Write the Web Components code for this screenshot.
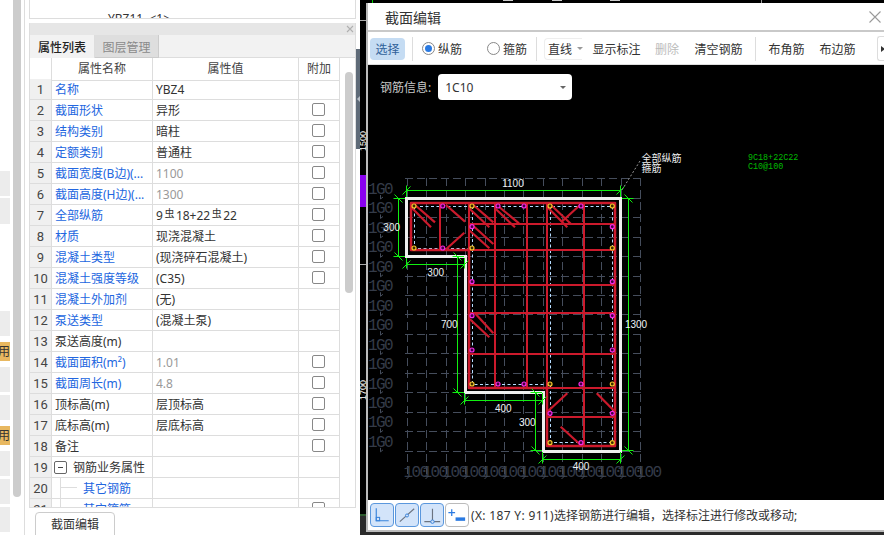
<!DOCTYPE html>
<html>
<head>
<meta charset="utf-8">
<title>截面编辑</title>
<style>
    html, body { margin: 0; padding: 0; background: #fff; overflow: hidden; }
    body { font-family: "Noto Sans", "Noto Sans CJK SC", sans-serif; font-size: 12px; color: #333; }
</style>
</head>
<body>
<gl-workspace>
    <gl-side-rail></gl-side-rail>
    <gl-attr-column>
        <gl-attr-row num="1" label="名称" link nocheck>YBZ4</gl-attr-row>
        <gl-attr-row num="2" label="截面形状" link>异形</gl-attr-row>
        <gl-attr-row num="3" label="结构类别" link>暗柱</gl-attr-row>
        <gl-attr-row num="4" label="定额类别" link>普通柱</gl-attr-row>
        <gl-attr-row num="5" label="截面宽度(B边)(..." link muted>1100</gl-attr-row>
        <gl-attr-row num="6" label="截面高度(H边)(..." link muted>1300</gl-attr-row>
        <gl-attr-row num="7" label="全部纵筋" link>9<gl-rebar-mark></gl-rebar-mark>18+22<gl-rebar-mark></gl-rebar-mark>22</gl-attr-row>
        <gl-attr-row num="8" label="材质" link>现浇混凝土</gl-attr-row>
        <gl-attr-row num="9" label="混凝土类型" link>(现浇碎石混凝土)</gl-attr-row>
        <gl-attr-row num="10" label="混凝土强度等级" link>(C35)</gl-attr-row>
        <gl-attr-row num="11" label="混凝土外加剂" link nocheck>(无)</gl-attr-row>
        <gl-attr-row num="12" label="泵送类型" link nocheck>(混凝土泵)</gl-attr-row>
        <gl-attr-row num="13" label="泵送高度(m)" nocheck></gl-attr-row>
        <gl-attr-row num="14" label="截面面积(m²)" link muted>1.01</gl-attr-row>
        <gl-attr-row num="15" label="截面周长(m)" link muted>4.8</gl-attr-row>
        <gl-attr-row num="16" label="顶标高(m)">层顶标高</gl-attr-row>
        <gl-attr-row num="17" label="底标高(m)">层底标高</gl-attr-row>
        <gl-attr-row num="18" label="备注"></gl-attr-row>
        <gl-attr-row num="19" label="钢筋业务属性" tree="group" nocheck></gl-attr-row>
        <gl-attr-row num="20" label="其它钢筋" link tree="leaf" nocheck></gl-attr-row>
        <gl-attr-row num="21" label="其它箍筋" link tree="leaf"></gl-attr-row>
    </gl-attr-column>
    <gl-splitter></gl-splitter>
    <gl-cad-view>
        <gl-section-dialog>
            <gl-tool-btn active style="margin-left:2px;width:35px">选择</gl-tool-btn>
            <gl-tool-sep style="margin-left:7px"></gl-tool-sep>
            <gl-tool-radio checked style="margin-left:9px;width:40px">纵筋</gl-tool-radio>
            <gl-tool-radio style="margin-left:25px;width:42px">箍筋</gl-tool-radio>
            <gl-tool-sep style="margin-left:7px"></gl-tool-sep>
            <gl-tool-combo style="margin-left:7px">直线</gl-tool-combo>
            <gl-tool-btn style="margin-left:10px;width:49px">显示标注</gl-tool-btn>
            <gl-tool-btn disabled style="margin-left:14px;width:24px">删除</gl-tool-btn>
            <gl-tool-btn style="margin-left:15px;width:49px">清空钢筋</gl-tool-btn>
            <gl-tool-sep style="margin-left:12px"></gl-tool-sep>
            <gl-tool-btn style="margin-left:12px;width:37px">布角筋</gl-tool-btn>
            <gl-tool-btn style="margin-left:14px;width:37px">布边筋</gl-tool-btn>
            <gl-tool-more style="margin-left:21px"></gl-tool-more>
            <gl-section-canvas slot="canvas"></gl-section-canvas>
            <gl-snap-btn slot="status" icon="corner" on></gl-snap-btn>
            <gl-snap-btn slot="status" icon="line" on></gl-snap-btn>
            <gl-snap-btn slot="status" icon="perp" on></gl-snap-btn>
            <gl-snap-btn slot="status" icon="add"></gl-snap-btn>
            <span slot="message"><span style="letter-spacing:.33px">(X: 187 Y: 911)</span>选择钢筋进行编辑，选择标注进行修改或移动;</span>
        </gl-section-dialog>
    </gl-cad-view>
</gl-workspace>

<script>
const tmplWorkspace = document.createElement('template');
tmplWorkspace.innerHTML = `
    <style>
        :host{ display:flex; width:884px; height:535px; overflow:hidden; background:#fff; }
    </style>
    <slot></slot>
`;
class GlWorkspace extends HTMLElement {
    constructor() {
        super()
        this.attachShadow({ mode: 'open' })
        this.shadowRoot.appendChild(tmplWorkspace.content.cloneNode(true))
    }
}
window.customElements.define('gl-workspace', GlWorkspace);

// left rail: cut off list blocks + scrollbar of the window behind
const tmplSideRail = document.createElement('template');
tmplSideRail.innerHTML = `
    <style>
        :host{ display:flex; flex:none; width:29px; height:535px; background:#fff; box-sizing:border-box; overflow:hidden; }
        #blocks{ width:10px; flex:none; display:flex; flex-direction:column; overflow:hidden; }
        .block{ flex:none; background:#ececec; }
        .block.warn{ background:#e8b860; color:#333; font-size:12px; line-height:20px; text-align:right; overflow:hidden; white-space:nowrap; direction:rtl; }
        #bar{ width:8px; height:497px; margin-left:3px; background:#ccc; border-radius:0 0 4px 4px; flex:none; }
        #line{ width:1px; height:535px; margin-left:3px; background:#ddd; flex:none; }
    </style>
    <div id="blocks"></div>
    <div id="bar"></div>
    <div id="line"></div>
`;
class GlSideRail extends HTMLElement {
    constructor() {
        super()
        this.attachShadow({ mode: 'open' })
        this.shadowRoot.appendChild(tmplSideRail.content.cloneNode(true))
    }
    connectedCallback() {
        // [gap above, height, warn]
        const blocks = [[171, 25], [2, 26], [87, 25], [6, 19, 1], [6, 25], [3, 25], [6, 19, 1], [6, 25], [3, 25], [3, 25]];
        const host = this.shadowRoot.getElementById('blocks');
        blocks.forEach(b => {
            const el = document.createElement('div');
            el.className = b[2] ? 'block warn' : 'block';
            el.style.marginTop = b[0] + 'px';
            el.style.height = b[1] + 'px';
            if (b[2]) el.textContent = '用';
            host.appendChild(el);
        });
    }
}
window.customElements.define('gl-side-rail', GlSideRail);

const tmplAttrColumn = document.createElement('template');
tmplAttrColumn.innerHTML = `
    <style>
        :host{ display:flex; flex-direction:column; flex:none; width:327px; height:535px; box-sizing:border-box; overflow:hidden; background:#fff; }
        #peek{ flex:none; height:19px; box-sizing:border-box; border:1px solid #ddd; border-top:none; overflow:hidden; padding-left:78px; font-size:12px; line-height:37px; color:#333; white-space:pre; }
        #panel{ flex:none; margin-top:4px; height:485px; box-sizing:border-box; border:1px solid #ddd; border-top:none; display:flex; flex-direction:column; overflow:hidden; }
        #head{ flex:none; height:12px; background:#e6e6e6; display:flex; justify-content:flex-end; align-items:center; padding-right:2px; margin:0 -1px; }
        #tabs{ flex:none; height:23px; background:#f2f2f2; display:flex; border-bottom:1px solid #ddd; box-sizing:border-box; }
        .tab{ height:23px; width:65px; box-sizing:border-box; text-align:center; line-height:25px; font-size:12px; }
        .tab.on{ color:#222; font-weight:500; background:#f2f2f2; border-right:1px solid #ddd; }
        .tab.off{ color:#8a8a8a; background:#dedede; border-right:1px solid #ccc; border-bottom:1px solid #ccc; width:64px; }
        #body{ flex:1; display:flex; min-height:0; }
        #table{ flex:none; width:310px; display:flex; flex-direction:column; overflow:hidden; }
        #columns{ flex:none; display:grid; grid-template-columns:22px 101px 146px 41px; height:21px; font-size:12px; color:#444; }
        #columns div{ box-sizing:border-box; border-right:1px solid #ddd; border-bottom:1px solid #ddd; text-align:center; line-height:22px; }
        #gutter{ flex:1; box-sizing:border-box; padding:14px 0 0 5px; }
        #thumb{ width:8px; height:221px; background:#ccc; border-radius:4px; }
        #foot{ flex:none; padding:4px 0 0 6px; }
        button{ display:block; width:80px; height:30px; box-sizing:border-box; background:#fff; border:1px solid #ccc; border-radius:4px; font:inherit; color:#333; font-size:12px; line-height:22px; padding:0 0 4px; }
    </style>
    <div id="peek">YBZ11  &lt;1&gt;</div>
    <div id="panel">
        <div id="head">
            <svg width="8" height="8" viewBox="0 0 8 8"><path d="M1 1L7 7M7 1L1 7" stroke="#b0b0b0" stroke-width="1.1" fill="none"/></svg>
        </div>
        <div id="tabs">
            <div class="tab on">属性列表</div>
            <div class="tab off">图层管理</div>
        </div>
        <div id="body">
            <div id="table">
                <div id="columns">
                    <div></div><div>属性名称</div><div>属性值</div><div>附加</div>
                </div>
                <slot></slot>
            </div>
            <div id="gutter"><div id="thumb"></div></div>
        </div>
    </div>
    <div id="foot"><button>截面编辑</button></div>
`;
class GlAttrColumn extends HTMLElement {
    constructor() {
        super()
        this.attachShadow({ mode: 'open' })
        this.shadowRoot.appendChild(tmplAttrColumn.content.cloneNode(true))
    }
}
window.customElements.define('gl-attr-column', GlAttrColumn);

const tmplAttrRow = document.createElement('template');
tmplAttrRow.innerHTML = `
    <style>
        :host{ display:grid; flex:none; grid-template-columns:22px 101px 146px 41px; height:21px; font-size:12px; color:#333; }
        .cell{ box-sizing:border-box; height:21px; border-right:1px solid #ddd; border-bottom:1px solid #ddd; line-height:22px; white-space:nowrap; overflow:hidden; }
        #num{ background:#f0f0f0; text-align:center; font-family:Roboto, "Noto Sans", sans-serif; font-size:13px; color:#444; }
        #name{ padding-left:3px; position:relative; display:flex; align-items:center; }
        #label{ line-height:20px; padding-top:2px; margin-bottom:0; height:20px; margin-top:0; }
        :host([link]) #label{ color:#2266e0; }
        #value{ padding-left:3px; }
        :host([muted]) #value{ color:#999; }
        #check{ display:flex; align-items:center; justify-content:center; padding-right:1px; padding-bottom:1px; }
        #box{ width:13px; height:13px; box-sizing:border-box; border:1px solid #888; border-radius:2px; background:#fff; }
        :host([nocheck]) #box{ display:none; }
        #toggle{ display:none; width:13px; height:13px; box-sizing:border-box; border:1px solid #666; border-radius:2px; margin-left:-1px; margin-right:6px; position:relative; }
        #toggle::after{ content:""; position:absolute; left:3px; right:3px; top:5px; height:1px; background:#444; }
        :host([tree="group"]) #toggle{ display:block; }
        :host([tree="leaf"]) #name{ padding-left:31px; }
        :host([tree="leaf"]) #name::before{ content:""; position:absolute; left:8px; top:0; bottom:0; width:1px; background:#ddd; }
        :host([tree="leaf"]) #name::after{ content:""; position:absolute; left:9px; top:9px; width:16px; height:1px; background:#ddd; }
    </style>
    <div class="cell" id="num"></div>
    <div class="cell" id="name"><span id="toggle"></span><span id="label"></span></div>
    <div class="cell" id="value"><slot></slot></div>
    <div class="cell" id="check"><div id="box"></div></div>
`;
class GlAttrRow extends HTMLElement {
    constructor() {
        super()
        this.attachShadow({ mode: 'open' })
        this.shadowRoot.appendChild(tmplAttrRow.content.cloneNode(true))
    }
    $(id) { return this.shadowRoot.getElementById(id) }
    attributeChangedCallback(name, oldVal, newVal) {
        switch (name) {
            case 'num':
                this.$('num').textContent = newVal;
                break;
            case 'label':
                this.$('label').textContent = newVal;
                break;
            default:
                break;
        }
    }
    static get observedAttributes() {
        return ['num', 'label']
    }
}
window.customElements.define('gl-attr-row', GlAttrRow);

// steel grade sign in the rebar text, the app's font has it as a small raised glyph
const tmplRebarMark = document.createElement('template');
tmplRebarMark.innerHTML = `
    <style>
        :host{ display:inline-block; font-size:10px; line-height:10px; vertical-align:3px; margin:0 1.5px; color:#333; }
    </style>
    虫
`;
class GlRebarMark extends HTMLElement {
    constructor() {
        super()
        this.attachShadow({ mode: 'open' })
        this.shadowRoot.appendChild(tmplRebarMark.content.cloneNode(true))
    }
}
window.customElements.define('gl-rebar-mark', GlRebarMark);

const tmplSplitter = document.createElement('template');
tmplSplitter.innerHTML = `
    <style>
        :host{ display:block; flex:none; width:4px; height:535px; padding-top:49px; box-sizing:border-box; background:#fff; }
        #grip{ width:4px; height:100px; background:#5f6b78; display:flex; align-items:center; justify-content:center; }
        #grip::after{ content:""; border-right:3px solid #b9c0c8; border-top:3px solid transparent; border-bottom:3px solid transparent; }
    </style>
    <div id="grip"></div>
`;
class GlSplitter extends HTMLElement {
    constructor() {
        super()
        this.attachShadow({ mode: 'open' })
        this.shadowRoot.appendChild(tmplSplitter.content.cloneNode(true))
    }
}
window.customElements.define('gl-splitter', GlSplitter);

// the cad drawing behind the dialog, only its edges show
const tmplCadView = document.createElement('template');
tmplCadView.innerHTML = `
    <style>
        :host{ display:block; position:relative; flex:1; height:535px; box-sizing:border-box; padding:3px 0 3px 6px; background:#000; overflow:hidden; }
        svg{ position:absolute; left:0; top:0; width:524px; height:535px; }
        text{ font-family:"Liberation Sans", sans-serif; font-size:9px; fill:#fff; }
        ::slotted(*){ position:relative; }
    </style>
    <svg viewBox="360 0 524 535">
        <rect x="360" y="175" width="7" height="32" fill="#8a00f0"/>
        <rect x="360" y="20" width="7" height="1" fill="#aaa"/>
        <rect x="360" y="264" width="7" height="1" fill="#aaa"/>
        <rect x="360" y="514" width="7" height="2" fill="#2c5a2c"/>
        <rect x="360" y="516" width="7" height="19" fill="#2b2b2b"/>
        <rect x="367" y="532" width="517" height="3" fill="#2b2b2b"/>
        <rect x="372" y="0" width="1" height="3" fill="#0c0"/>
        <rect x="761" y="0" width="1" height="3" fill="#999"/>
        <rect x="503" y="0" width="10" height="1" fill="#ccc"/>
        <rect x="552" y="0" width="10" height="1" fill="#ccc"/>
        <rect x="610" y="0" width="10" height="1" fill="#ccc"/>
        <text transform="translate(365.5 151) rotate(-90)">1500</text>
        <text transform="translate(365.5 400) rotate(-90)">1700</text>
    </svg>
    <slot></slot>
`;
class GlCadView extends HTMLElement {
    constructor() {
        super()
        this.attachShadow({ mode: 'open' })
        this.shadowRoot.appendChild(tmplCadView.content.cloneNode(true))
    }
}
window.customElements.define('gl-cad-view', GlCadView);

const tmplSectionDialog = document.createElement('template');
tmplSectionDialog.innerHTML = `
    <style>
        :host{ display:flex; flex-direction:column; width:518px; height:529px; box-sizing:border-box; background:#fff; border-left:2px solid #bbb; border-bottom:2px solid #bbb; }
        #title{ flex:none; height:27px; display:flex; align-items:center; justify-content:space-between; padding:0 0 0 17px; font-size:14px; color:#333; }
        #title svg{ margin-right:2px; }
        #tools{ flex:none; height:35px; box-sizing:border-box; border-top:2px solid #c9c9c9; border-bottom:1px solid #ddd; display:flex; align-items:center; padding-top:1px; }
        #canvas{ flex:1; min-height:0; display:flex; }
        #status{ flex:none; height:30px; box-sizing:border-box; padding:3px 0 3px 2px; display:flex; align-items:center; gap:1px; font-size:12px; color:#333; white-space:nowrap; }
        #message{ margin-left:1px; }
    </style>
    <div id="title">
        <span>截面编辑</span>
        <svg width="14" height="14" viewBox="0 0 14 14"><path d="M1.5 1.5L12.5 12.5M12.5 1.5L1.5 12.5" stroke="#9a9a9a" stroke-width="1.1" fill="none"/></svg>
    </div>
    <div id="tools"><slot></slot></div>
    <div id="canvas"><slot name="canvas"></slot></div>
    <div id="status"><slot name="status"></slot><span id="message"><slot name="message"></slot></span></div>
`;
class GlSectionDialog extends HTMLElement {
    constructor() {
        super()
        this.attachShadow({ mode: 'open' })
        this.shadowRoot.appendChild(tmplSectionDialog.content.cloneNode(true))
    }
}
window.customElements.define('gl-section-dialog', GlSectionDialog);

const tmplToolBtn = document.createElement('template');
tmplToolBtn.innerHTML = `
    <style>
        :host{ display:block; flex:none; height:22px; line-height:23px; text-align:center; font-size:12px; color:#333; border-radius:4px; white-space:nowrap; }
        :host([active]){ background:#c5dcf3; color:#2f6199; }
        :host([disabled]){ color:#bbb; }
    </style>
    <slot></slot>
`;
class GlToolBtn extends HTMLElement {
    constructor() {
        super()
        this.attachShadow({ mode: 'open' })
        this.shadowRoot.appendChild(tmplToolBtn.content.cloneNode(true))
    }
}
window.customElements.define('gl-tool-btn', GlToolBtn);

const tmplToolSep = document.createElement('template');
tmplToolSep.innerHTML = `
    <style>
        :host{ display:block; flex:none; width:1px; height:24px; background:#ddd; }
    </style>
`;
class GlToolSep extends HTMLElement {
    constructor() {
        super()
        this.attachShadow({ mode: 'open' })
        this.shadowRoot.appendChild(tmplToolSep.content.cloneNode(true))
    }
}
window.customElements.define('gl-tool-sep', GlToolSep);

const tmplToolRadio = document.createElement('template');
tmplToolRadio.innerHTML = `
    <style>
        :host{ display:flex; flex:none; align-items:center; font-size:12px; color:#333; white-space:nowrap; }
        #ring{ width:13px; height:13px; box-sizing:border-box; border:1px solid #888; border-radius:50%; margin-right:3px; flex:none; display:flex; align-items:center; justify-content:center; }
        #dot{ display:none; width:7px; height:7px; border-radius:50%; background:#2a7ae2; }
        :host([checked]) #dot{ display:block; }
    </style>
    <div id="ring"><div id="dot"></div></div>
    <slot></slot>
`;
class GlToolRadio extends HTMLElement {
    constructor() {
        super()
        this.attachShadow({ mode: 'open' })
        this.shadowRoot.appendChild(tmplToolRadio.content.cloneNode(true))
    }
}
window.customElements.define('gl-tool-radio', GlToolRadio);

const tmplToolCombo = document.createElement('template');
tmplToolCombo.innerHTML = `
    <style>
        :host{ display:flex; flex:none; align-items:center; width:38px; height:22px; box-sizing:border-box; padding-left:3px; font-size:12px; color:#333; border:1px solid #eee; border-right:none; border-radius:4px 0 0 4px; white-space:nowrap; }
        #caret{ flex:none; margin-left:5px; border-top:3px solid #999; border-left:3px solid transparent; border-right:3px solid transparent; }
    </style>
    <slot></slot><div id="caret"></div>
`;
class GlToolCombo extends HTMLElement {
    constructor() {
        super()
        this.attachShadow({ mode: 'open' })
        this.shadowRoot.appendChild(tmplToolCombo.content.cloneNode(true))
    }
}
window.customElements.define('gl-tool-combo', GlToolCombo);

const tmplToolMore = document.createElement('template');
tmplToolMore.innerHTML = `
    <style>
        :host{ display:flex; flex:none; align-items:center; padding-left:3px; width:8px; height:25px; box-sizing:border-box; border:1px solid #ddd; border-right:none; border-radius:3px 0 0 3px; }
        #caret{ border-left:4px solid #333; border-top:3px solid transparent; border-bottom:3px solid transparent; }
    </style>
    <div id="caret"></div>
`;
class GlToolMore extends HTMLElement {
    constructor() {
        super()
        this.attachShadow({ mode: 'open' })
        this.shadowRoot.appendChild(tmplToolMore.content.cloneNode(true))
    }
}
window.customElements.define('gl-tool-more', GlToolMore);

const tmplSectionCanvas = document.createElement('template');
tmplSectionCanvas.innerHTML = `
    <style>
        :host{ display:block; position:relative; flex:1; background:#000; overflow:hidden; }
        svg{ position:absolute; left:0; top:0; width:516px; height:435px; }
        #info{ position:relative; display:flex; align-items:center; padding:9px 0 0 12px; color:#c8c8c8; font-size:12px; }
        #combo{ width:134px; height:26px; box-sizing:border-box; margin-left:7px; background:#fff; border-radius:4px; color:#333; display:flex; align-items:center; justify-content:space-between; padding:0 6px 0 7px; }
        #combo::after{ content:""; border-top:3px solid #666; border-left:3px solid transparent; border-right:3px solid transparent; }
        .lbl{ font-family:"Liberation Sans", sans-serif; font-size:10px; fill:#eef2f5; text-anchor:middle; dominant-baseline:central; }
        .grid-txt{ font-family:"Liberation Mono", monospace; font-size:16px; letter-spacing:-1.6px; fill:#343b48; dominant-baseline:central; }
        .note{ font-family:"Noto Sans CJK SC", sans-serif; font-size:10px; fill:#eee; dominant-baseline:central; }
        .code{ font-family:"Liberation Mono", monospace; font-size:8.4px; fill:#0b0; dominant-baseline:central; }
    </style>
    <svg id="draw" viewBox="368 65 516 435"></svg>
    <div id="info"><span>钢筋信息:</span><div id="combo"><span>1C10</span></div></div>
`;
class GlSectionCanvas extends HTMLElement {
    constructor() {
        super()
        this.attachShadow({ mode: 'open' })
        this.shadowRoot.appendChild(tmplSectionCanvas.content.cloneNode(true))
    }
    connectedCallback() {
        this.shadowRoot.getElementById('draw').innerHTML = this.drawing();
    }
    line(x1, y1, x2, y2, color, w, dash) {
        return `<line x1="${x1}" y1="${y1}" x2="${x2}" y2="${y2}" stroke="${color}" stroke-width="${w}"${dash ? ` stroke-dasharray="${dash}"` : ''}/>`;
    }
    drawing() {
        const step = 19.45;
        const grid = '#454d5c', red = '#cc1a2c', green = '#10f010', wall = '#efefef', tie = '#b4dcff';
        let s = '';

        // dashed grid with its 100 labels
        for (let k = 0; k <= 14; k++) {
            const y = Math.round(178.3 + k * step) + .5;
            s += this.line(405, y, 642, y, grid, 1, '8 4');
        }
        for (let k = 0; k <= 12; k++) {
            const x = Math.round(406.7 + k * step) + .5;
            s += this.line(x, 178, x, 478, grid, 1, '8 4');
            s += `<text class="grid-txt" x="${x - 4}" y="473">100</text>`;
            s += this.line(x - 1, 479, x + 2, 476, grid, 1);
        }
        for (let k = 0; k < 14; k++) {
            const y = 190 + k * step;
            s += `<text class="grid-txt" x="368" y="${y}">1G0</text>`;
            s += this.line(380.5, y + 5, 380.5, y + 9, grid, 1);
            s += this.line(380.5, y + 9, 383, y + 7, grid, 1);
        }

        // dashed stirrup
        const dash = '3 2.5';
        s += `<path d="M414.5 206.5H612.5V442.5H550.5V384.5H472.5V248.5H414.5Z" fill="none" stroke="${tie}" stroke-width="1" stroke-dasharray="${dash}"/>`;
        s += this.line(472.5, 206, 472.5, 248, tie, 1, dash);
        s += this.line(550.5, 206, 550.5, 384, tie, 1, dash);

        // rebars
        s += `<path d="M411 203H615V446H547V388H469V250H411Z" fill="none" stroke="${red}" stroke-width="2.5" stroke-linejoin="round"/>`;
        [[469, 224], [411, 250], [469, 285], [469, 313], [469, 354], [469, 388], [547, 417]].forEach(h => {
            s += this.line(h[0], h[1], 615, h[1], red, 2);
        });
        [[440, 250], [469, 250], [495, 388], [527, 388], [547, 446], [584, 446]].forEach(v => {
            s += this.line(v[0], 203, v[0], v[1], red, 2);
        });
        [[415, 205, 435, 222.3], [410.7, 206.7, 431, 227.3], [446, 205, 465, 221.7], [446, 249.3, 464.3, 232.7],
         [473.3, 205, 493.3, 222.3], [469, 208.3, 489.3, 227.3], [496.7, 205, 519, 223.3], [495, 208.3, 515, 227.3],
         [551, 205, 571, 224], [547.3, 207, 567.3, 227.3], [580, 205, 561.7, 221.7],
         [473.3, 226, 493.3, 244], [469, 230, 489.3, 248.3], [475, 313.3, 493.3, 333.3], [470, 319.3, 489.3, 337.3],
         [547.3, 411.7, 567.3, 393.3], [596.7, 393.3, 615, 411.7], [560.7, 426.7, 580.7, 445]].forEach(d => {
            s += this.line(d[0], d[1], d[2], d[3], red, 2.2);
        });

        // wall outline
        s += `<path d="M406.5 198.5H620.5V451.5H543.5V392.5H465.5V256.5H406.5Z" fill="none" stroke="${wall}" stroke-width="3"/>`;

        // bar dots
        [[414, 206], [472, 206], [550, 206], [612.3, 206], [414, 248], [472, 248], [612.3, 248], [472, 384], [550, 384], [612.3, 384], [550, 442.7], [612.3, 442.7]].forEach(p => {
            s += `<circle cx="${p[0]}" cy="${p[1]}" r="2" fill="#3a2c00" stroke="#f6c62c" stroke-width="1.2"/>`;
        });
        [[442.7, 206], [498, 206], [524, 206], [581, 206], [442.7, 248], [472, 226.7], [612.3, 226.7], [472, 281.7], [612.3, 281.7], [472, 315.7], [612.3, 315.7], [472, 350], [612.3, 350], [498, 384], [524, 384], [581, 384], [550, 413.3], [612.3, 413.3], [581, 442.7]].forEach(p => {
            s += `<circle cx="${p[0]}" cy="${p[1]}" r="2" fill="#400040" stroke="#f428e4" stroke-width="1.2"/>`;
        });

        // dimensions: horizontal [x1, x2, y, from] and vertical [y1, y2, x, from]
        [[406.5, 620.5, 190.5, 197], [406.5, 464.5, 264.5, 258], [464.5, 542.5, 400.5, 393], [542.5, 620.5, 459.5, 452]].forEach(d => {
            s += this.line(d[0], d[2], d[1], d[2], green, 1);
            [d[0], d[1]].forEach(x => {
                s += this.line(x, d[3], x, d[2] + (d[2] < d[3] ? -5 : 4), green, 1);
                s += this.line(x - 4, d[2] + 4, x + 4, d[2] - 4, green, 1);
            });
        });
        [[198.5, 256.5, 398.5, 405], [256.5, 392.5, 457.5, 464], [198.5, 450.5, 628.5, 622], [392.5, 450.5, 535.5, 542]].forEach(d => {
            s += this.line(d[2], d[0], d[2], d[1], green, 1);
            [d[0], d[1]].forEach(y => {
                s += this.line(d[3], y, d[2] + (d[2] < d[3] ? -5 : 5), y, green, 1);
                s += this.line(d[2] - 4, y - 4, d[2] + 4, y + 4, green, 1);
            });
        });
        [[513, 183, '1100'], [391.7, 227.3, '300'], [435.7, 272.3, '300'], [449.3, 324.3, '700'], [636, 324.3, '1300'], [503.3, 408.3, '400'], [527.3, 422.3, '300'], [581, 466, '400']].forEach(t => {
            s += `<text class="lbl" x="${t[0]}" y="${t[1]}">${t[2]}</text>`;
        });

        // leader note and rebar summary
        s += this.line(640, 161, 622, 190, '#999', 1, '2 2');
        s += `<text class="note" x="641.5" y="157.5">全部纵筋</text><text class="note" x="641.5" y="167">箍筋</text>`;
        s += `<text class="code" x="748" y="157.5">9C18+22C22</text><text class="code" x="748" y="167">C10@100</text>`;
        return s;
    }
}
window.customElements.define('gl-section-canvas', GlSectionCanvas);

const snapIcons = {
    corner: '<path d="M5.5 4.5V17.5H18.5" fill="none" stroke="#3a84dc" stroke-width="1.2"/><rect x="5.5" y="14" width="3.5" height="3.5" fill="none" stroke="#3a84dc" stroke-width="1.1"/>',
    line: '<path d="M4 18.5L19 5" fill="none" stroke="#6b7380" stroke-width="1.2"/><circle cx="11.5" cy="12" r="1.6" fill="#cfe0f7" stroke="#3a84dc"/>',
    perp: '<path d="M3.5 18.5H20M12 5V18.5" fill="none" stroke="#6b7380" stroke-width="1.2"/><circle cx="12" cy="18.5" r="1.8" fill="#cfe0f7" stroke="#3a84dc"/>',
    add: '<path d="M6 5.5V12.5M2.5 9H9.5" fill="none" stroke="#2a7ae2" stroke-width="1.3"/><rect x="10" y="14" width="10" height="3.6" fill="#2a7ae2"/>'
};
const tmplSnapBtn = document.createElement('template');
tmplSnapBtn.innerHTML = `
    <style>
        :host{ display:block; flex:none; width:24px; height:24px; box-sizing:border-box; background:#fff; border:1px solid #bbb; border-radius:4px; }
        :host([on]){ background:#d3e4fa; border-color:#5a97dd; }
        svg{ display:block; width:22px; height:22px; }
    </style>
    <svg id="icon" viewBox="0 0 23 23"></svg>
`;
class GlSnapBtn extends HTMLElement {
    constructor() {
        super()
        this.attachShadow({ mode: 'open' })
        this.shadowRoot.appendChild(tmplSnapBtn.content.cloneNode(true))
    }
    attributeChangedCallback(name, oldVal, newVal) {
        if (name === 'icon') this.shadowRoot.getElementById('icon').innerHTML = snapIcons[newVal];
    }
    static get observedAttributes() {
        return ['icon']
    }
}
window.customElements.define('gl-snap-btn', GlSnapBtn);
</script>
</body>
</html>
